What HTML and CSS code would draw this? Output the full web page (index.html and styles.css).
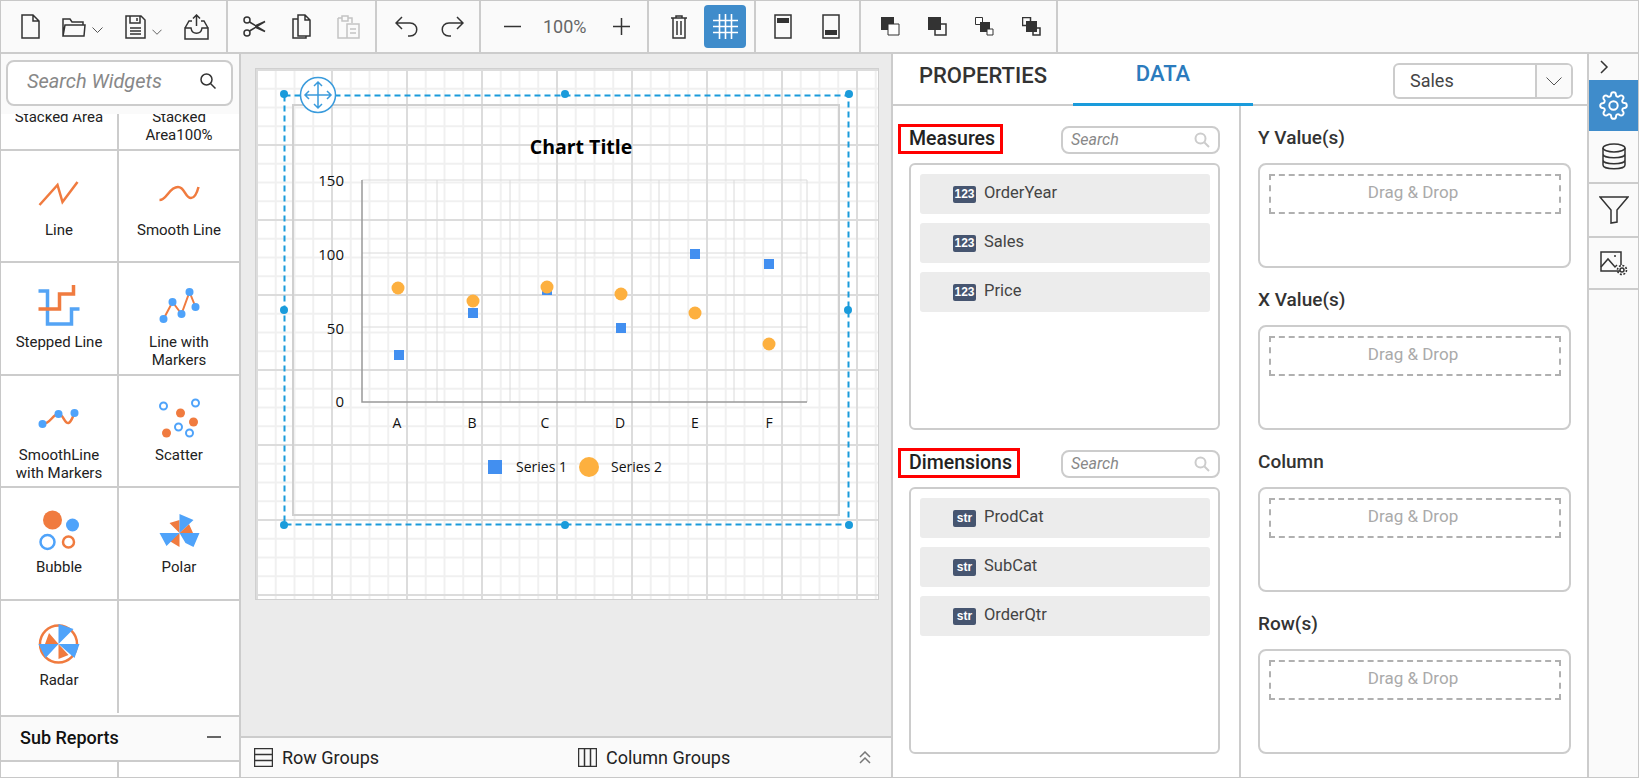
FILE: index.html
```html
<!DOCTYPE html>
<html lang="en">
<head>
    <meta charset="UTF-8">
    <title>Report Designer</title>
    <link rel="stylesheet" href="styles.css">
</head>
<body>
<div class="app">

    <div class="toolbar">
        <div class="tb-group tb-file">
            <svg class="ico" width="19" height="25" viewBox="0 0 19 25"><path d="M1 1h11l6 6v17H1zM12 1v6h6"/></svg>
            <span class="tb-drop">
                <svg class="ico" width="24" height="20" viewBox="0 0 24 20"><path d="M1 19V2h7l2 3h11v3M1 19h21l1-11H3L1 19z"/></svg>
                <svg class="chev" width="11" height="6" viewBox="0 0 11 6"><path d="M.5.5l5 5 5-5"/></svg>
            </span>
            <span class="tb-drop">
                <svg class="ico" width="21" height="24" viewBox="0 0 21 24"><path d="M1 1h15l4 4v18H1zM5 1v7h10V1M12 3v3M5 13h11M5 16h11M5 19h11"/></svg>
                <svg class="chev" width="10" height="6" viewBox="0 0 11 6"><path d="M.5.5l5 5 5-5"/></svg>
            </span>
            <svg class="ico" width="25" height="26" viewBox="0 0 25 26"><path d="M1 14l4-7h3M24 14l-4-7h-3M1 14v11h23V14h-6c-1 7-10 7-11 0H1zM12.500 12V1M9 4.500L12.500 1 16 4.500"/></svg>
        </div>
        <div class="tb-group tb-clip">
            <svg class="ico" width="23" height="21" viewBox="0 0 23 21"><circle cx="4" cy="4" r="3"/><circle cx="4" cy="17" r="3"/><path d="M6.500 6L22 15.500 12 11M6.500 15L22 5.500 12 10"/></svg>
            <svg class="ico" width="19" height="25" viewBox="0 0 19 25"><path d="M6 1h7l5 5v16H6zM6 5H1v19h13v-2M13 1v5h5"/></svg>
            <svg class="ico off" width="23" height="25" viewBox="0 0 23 25"><path d="M1 4h4V2h6v2h4v5M5 4v3h6V4M1 4v20h9M10 10h12v14H10zM13 15h6M13 19h6"/></svg>
        </div>
        <div class="tb-group tb-history">
            <svg class="ico" width="23" height="21" viewBox="0 0 23 21"><path d="M7 1L1 7l6 6M1 7h14c9 0 9 13 0 13h-2"/></svg>
            <svg class="ico" width="23" height="21" viewBox="0 0 23 21"><path d="M16 1l6 6-6 6M22 7H8c-9 0-9 13 0 13h2"/></svg>
        </div>
        <div class="tb-group tb-zoom">
            <svg class="ico" width="17" height="17" viewBox="0 0 17 17"><path d="M0 8.500h17"/></svg>
            <span class="zoom-value">100%</span>
            <svg class="ico" width="17" height="17" viewBox="0 0 17 17"><path d="M0 8.500h17M8.500 0v17"/></svg>
        </div>
        <div class="tb-group tb-edit">
            <svg class="ico" width="18" height="25" viewBox="0 0 18 25"><path d="M1 4h16M6 4V2h6v2M3 4v20h12V4M7 7v14M11 7v14"/></svg>
            <span class="grid-btn">
                <svg class="ico-white" width="25" height="25" viewBox="0 0 25 25"><path d="M0 6.500h25M0 12.500h25M0 18.500h25M6.500 0v25M12.500 0v25M18.500 0v25"/></svg>
            </span>
        </div>
        <div class="tb-group tb-band">
            <svg class="ico" width="18" height="25" viewBox="0 0 18 25"><path d="M1 1h16v23H1z"/><path class="solid" d="M3 4h12v5H3z"/></svg>
            <svg class="ico" width="18" height="25" viewBox="0 0 18 25"><path d="M1 1h16v23H1z"/><path class="solid" d="M3 16h12v5H3z"/></svg>
        </div>
        <div class="tb-group tb-order">
            <svg class="ico" width="19" height="19" viewBox="0 0 19 19"><path class="solid" d="M0 0h13v13H0z"/><path class="paper" d="M7 7h11v11H7z"/></svg>
            <svg class="ico" width="19" height="19" viewBox="0 0 19 19"><path d="M7 7h11v11H7z"/><path class="solid" d="M0 0h13v13H0z"/></svg>
            <svg class="ico" width="19" height="19" viewBox="0 0 19 19"><path class="paper" d="M.5.5h7v7h-7z"/><path class="solid" d="M5 5h10v10H5z"/><path class="paper" d="M12 12h6v6h-6z"/></svg>
            <svg class="ico" width="19" height="19" viewBox="0 0 19 19"><path d="M.5.500h8v8h-8zM11 11h7v7h-7z"/><path class="solid" d="M4 4h11v11H4z"/></svg>
        </div>
    </div>

    <div class="main">

        <div class="left-panel">
            <div class="widget-search-wrap">
                <div class="widget-search">
                    <span>Search Widgets</span>
                    <svg class="ico" width="16" height="16" viewBox="0 0 16 16"><circle cx="6.500" cy="6.500" r="5.500"/><path d="M10.500 10.500l5 5"/></svg>
                </div>
            </div>
            <div class="palette">
                <div class="palette-grid">
                    <div class="cell"><div class="cell-icon"></div><p>Stacked Area</p></div>
                    <div class="cell"><div class="cell-icon"></div><p>Stacked<br>Area100%</p></div>
                    <div class="cell">
                        <svg class="cell-icon" viewBox="0 0 48 48"><path class="or" d="M4.500 36L22.500 16l5 17 15-20"/></svg>
                        <p>Line</p>
                    </div>
                    <div class="cell">
                        <svg class="cell-icon" viewBox="0 0 48 48"><path class="or" d="M4.500 31C12 31 14 18 23 18c7 0 7 11 13 11 4 0 6-5 7.500-11"/></svg>
                        <p>Smooth Line</p>
                    </div>
                    <div class="cell">
                        <svg class="cell-icon" viewBox="0 0 48 48"><path class="bl-thick" d="M3.500 10h9v33h24V28h8"/><path class="or-thick" d="M3.500 28h21V13h14V4"/></svg>
                        <p>Stepped Line</p>
                    </div>
                    <div class="cell">
                        <svg class="cell-icon" viewBox="0 0 48 48"><path class="or-thin" d="M8.500 38l9-17 9 12 8-22 6 15"/><g class="bl-dots"><circle cx="8.500" cy="38" r="4"/><circle cx="17.500" cy="21" r="4"/><circle cx="26.500" cy="33" r="4"/><circle cx="34.500" cy="11" r="4"/><circle cx="40.500" cy="26" r="4"/></g></svg>
                        <p>Line with<br>Markers</p>
                    </div>
                    <div class="cell">
                        <svg class="cell-icon" viewBox="0 0 48 48"><path class="or" d="M7.500 30c8 0 10-10 16-10 5 0 6 10 10 9 3-1 4-6 6-10"/><g class="bl-dots"><circle cx="7.500" cy="30" r="4"/><circle cx="23.500" cy="20" r="4"/><circle cx="39.500" cy="19" r="4"/></g></svg>
                        <p>SmoothLine<br>with Markers</p>
                    </div>
                    <div class="cell">
                        <svg class="cell-icon" viewBox="0 0 48 48"><g class="bl-rings"><circle cx="8.500" cy="12" r="3.500"/><circle cx="40.500" cy="9" r="3.500"/><circle cx="23.500" cy="33" r="3.500"/><circle cx="34.500" cy="39" r="3.500"/></g><g class="or-dots"><circle cx="25.500" cy="19" r="4.500"/><circle cx="38.500" cy="28" r="4.500"/><circle cx="11.500" cy="39" r="4.500"/></g></svg>
                        <p>Scatter</p>
                    </div>
                    <div class="cell">
                        <svg class="cell-icon" viewBox="0 0 48 48"><g class="or-dots"><circle cx="17.500" cy="14" r="9.500"/></g><g class="bl-dots"><circle cx="37.500" cy="19" r="6.500"/></g><circle class="bl-ring-big" cx="12.500" cy="36" r="7"/><circle class="or-ring" cx="33.500" cy="36" r="5.500"/></svg>
                        <p>Bubble</p>
                    </div>
                    <div class="cell">
                        <svg class="cell-icon" viewBox="0 0 48 48"><g class="or-dots"><path d="M24.500 27L14.500 17l10-3zM24.500 27L34 18l4 9zM24.500 27v14l-10-6z"/></g><g class="bl-dots"><path d="M24.500 27V8l14 6zM24.500 27H4.500l7 13zM24.500 27h20l-6 14-8-4z"/></g></svg>
                        <p>Polar</p>
                    </div>
                    <div class="cell">
                        <svg class="cell-icon" viewBox="0 0 48 48"><circle class="or-ring-wide" cx="23.500" cy="25" r="18.500"/><g class="or-dots"><path d="M23.500 25L10 25l4-11zM23.500 25v15l10-4z"/></g><g class="bl-dots"><path d="M23.500 25V5l15 5zM23.500 25h-20l7 14zM23.500 25h21l-5 14z"/></g></svg>
                        <p>Radar</p>
                    </div>
                    <div class="cell"></div>
                </div>
            </div>
            <div class="sub-head">
                <span>Sub Reports</span>
                <svg class="ico" width="14" height="2" viewBox="0 0 14 2"><path d="M0 1h14"/></svg>
            </div>
            <div class="sub-stub"><div></div><div></div></div>
        </div>

        <div class="center">
            <div class="canvas">
                <div class="paper">
                    <svg class="chart" width="622" height="530" viewBox="256 69 622 530">
                        <rect class="frame" x="293" y="105" width="546" height="410"/>

                        <g class="plot-grid">
                            <path d="M362 180H807M362 253H807M362 327H807M437 180V402M510 180V402M585 180V402M659 180V402M734 180V402M807 180V402"/>
                        </g>
                        <path class="axis" d="M362 180V402H807"/>

                        <text class="chart-title" x="581" y="154" text-anchor="middle">Chart Title</text>
                        <text class="chart-num" x="344" y="186" text-anchor="end">150</text>
                        <text class="chart-num" x="344" y="260" text-anchor="end">100</text>
                        <text class="chart-num" x="344" y="334" text-anchor="end">50</text>
                        <text class="chart-num" x="344" y="407" text-anchor="end">0</text>
                        <text class="chart-label" x="397" y="428" text-anchor="middle">A</text>
                        <text class="chart-label" x="472" y="428" text-anchor="middle">B</text>
                        <text class="chart-label" x="545" y="428" text-anchor="middle">C</text>
                        <text class="chart-label" x="620" y="428" text-anchor="middle">D</text>
                        <text class="chart-label" x="695" y="428" text-anchor="middle">E</text>
                        <text class="chart-label" x="769" y="428" text-anchor="middle">F</text>

                        <g class="series-1">
                            <rect x="394" y="350" width="10" height="10"/>
                            <rect x="468" y="308" width="10" height="10"/>
                            <rect x="542" y="285" width="10" height="10"/>
                            <rect x="616" y="323" width="10" height="10"/>
                            <rect x="690" y="249" width="10" height="10"/>
                            <rect x="764" y="259" width="10" height="10"/>
                        </g>
                        <g class="series-2">
                            <circle cx="398" cy="288" r="6.500"/>
                            <circle cx="473" cy="301" r="6.500"/>
                            <circle cx="547" cy="287" r="6.500"/>
                            <circle cx="621" cy="294" r="6.500"/>
                            <circle cx="695" cy="313" r="6.500"/>
                            <circle cx="769" cy="344" r="6.500"/>
                        </g>

                        <rect class="legend-1" x="488" y="460" width="14" height="14"/>
                        <text class="chart-label" x="516" y="472">Series 1</text>
                        <circle class="legend-2" cx="589" cy="467" r="10"/>
                        <text class="chart-label" x="611" y="472">Series 2</text>

                        <rect class="select-line" x="284.500" y="95.500" width="564" height="429"/>
                        <g class="select-dots">
                            <circle cx="284" cy="94" r="4"/><circle cx="565" cy="94" r="4"/><circle cx="849" cy="94" r="4"/>
                            <circle cx="284" cy="310" r="4"/><circle cx="848" cy="310" r="4"/>
                            <circle cx="284" cy="525" r="4"/><circle cx="565" cy="525" r="4"/><circle cx="849" cy="525" r="4"/>
                        </g>
                        <circle class="move-ring" cx="318" cy="95" r="17.500"/>
                        <path class="move-arrows" d="M318 82V108M305 95H331M314 86l4-4 4 4M314 104l4 4 4-4M309 91l-4 4 4 4M327 91l4 4-4 4"/>
                    </svg>
                </div>
            </div>
            <div class="group-bar">
                <div class="group-item group-item-row">
                    <svg class="ico" width="19" height="19" viewBox="0 0 19 19"><path d="M.5.500h18v18H.5zM.5 6.500h18M.5 12.500h18"/></svg>
                    <span>Row Groups</span>
                </div>
                <div class="group-item">
                    <svg class="ico" width="19" height="19" viewBox="0 0 19 19"><path d="M.5.500h18v18H.5zM6.500.500v18M12.500.500v18"/></svg>
                    <span>Column Groups</span>
                </div>
                <svg class="collapse" width="12" height="13" viewBox="0 0 12 13"><path d="M1 6l5-5 5 5M1 12l5-5 5 5"/></svg>
            </div>
        </div>

        <div class="right-panel">
            <div class="tabs">
                <div class="tab-link">PROPERTIES</div>
                <div class="tab-link active">DATA</div>
                <div class="dataset-select">
                    <span class="dataset-name">Sales</span>
                    <span class="dataset-arrow"><svg class="chev" width="16" height="9" viewBox="0 0 16 9"><path d="M.5.500l7.500 7.500L15.500.5"/></svg></span>
                </div>
            </div>
            <div class="data-body">
                <div class="field-col">
                    <div class="field-head">
                        <span class="field-title marked">Measures</span>
                        <div class="mini-search">
                            <span>Search</span>
                            <svg width="16" height="16" viewBox="0 0 16 16"><circle cx="6.500" cy="6.500" r="5"/><path d="M10.500 10.500l4.500 4.500"/></svg>
                        </div>
                    </div>
                    <div class="field-list">
                        <div class="field-item"><span class="type-badge">123</span>OrderYear</div>
                        <div class="field-item"><span class="type-badge">123</span>Sales</div>
                        <div class="field-item"><span class="type-badge">123</span>Price</div>
                    </div>
                    <div class="field-head">
                        <span class="field-title marked">Dimensions</span>
                        <div class="mini-search">
                            <span>Search</span>
                            <svg width="16" height="16" viewBox="0 0 16 16"><circle cx="6.500" cy="6.500" r="5"/><path d="M10.500 10.500l4.500 4.500"/></svg>
                        </div>
                    </div>
                    <div class="field-list">
                        <div class="field-item"><span class="type-badge">str</span>ProdCat</div>
                        <div class="field-item"><span class="type-badge">str</span>SubCat</div>
                        <div class="field-item"><span class="type-badge">str</span>OrderQtr</div>
                    </div>
                </div>
                <div class="drop-col">
                    <div class="drop-title">Y Value(s)</div>
                    <div class="drop-box"><div class="drop-zone">Drag &amp; Drop</div></div>
                    <div class="drop-title">X Value(s)</div>
                    <div class="drop-box"><div class="drop-zone">Drag &amp; Drop</div></div>
                    <div class="drop-title">Column</div>
                    <div class="drop-box"><div class="drop-zone">Drag &amp; Drop</div></div>
                    <div class="drop-title">Row(s)</div>
                    <div class="drop-box"><div class="drop-zone">Drag &amp; Drop</div></div>
                </div>
            </div>
        </div>

        <div class="rail">
            <div class="rail-item rail-toggle">
                <svg class="ico" width="9" height="14" viewBox="0 0 9 14"><path d="M1 1l6 6-6 6"/></svg>
            </div>
            <div class="rail-item rail-active">
                <svg class="ico-white" width="29" height="29" viewBox="0 0 24 24"><circle cx="12" cy="12" r="3.500"/><path d="M19.400 15a1.650 1.650 0 0 0 .33 1.820l.06.06a2 2 0 0 1 0 2.830 2 2 0 0 1-2.830 0l-.06-.06a1.650 1.650 0 0 0-1.820-.33 1.650 1.650 0 0 0-1 1.510V21a2 2 0 0 1-2 2 2 2 0 0 1-2-2v-.09A1.650 1.650 0 0 0 9 19.400a1.650 1.650 0 0 0-1.820.33l-.06.06a2 2 0 0 1-2.830 0 2 2 0 0 1 0-2.830l.06-.06a1.650 1.650 0 0 0 .33-1.820 1.650 1.650 0 0 0-1.510-1H3a2 2 0 0 1-2-2 2 2 0 0 1 2-2h.09A1.650 1.650 0 0 0 4.600 9a1.650 1.650 0 0 0-.33-1.820l-.06-.06a2 2 0 0 1 0-2.830 2 2 0 0 1 2.830 0l.06.06a1.650 1.650 0 0 0 1.820.33H9a1.650 1.650 0 0 0 1-1.510V3a2 2 0 0 1 2-2 2 2 0 0 1 2 2v.09a1.650 1.650 0 0 0 1 1.510 1.650 1.650 0 0 0 1.820-.33l.06-.06a2 2 0 0 1 2.830 0 2 2 0 0 1 0 2.830l-.06.06a1.650 1.650 0 0 0-.33 1.820V9a1.650 1.650 0 0 0 1.510 1H21a2 2 0 0 1 2 2 2 2 0 0 1-2 2h-.09a1.650 1.650 0 0 0-1.510 1z"/></svg>
            </div>
            <div class="rail-item rail-db">
                <svg class="ico" width="24" height="27" viewBox="0 0 24 27"><ellipse cx="12" cy="5" rx="11" ry="4"/><path d="M1 5v17c0 5 22 5 22 0V5M1 11c0 5 22 5 22 0M1 17c0 5 22 5 22 0"/></svg>
            </div>
            <div class="rail-item rail-filter">
                <svg class="ico" width="30" height="28" viewBox="0 0 30 28"><path d="M1 1h28L18 14v12l-6 1V14z"/></svg>
            </div>
            <div class="rail-item">
                <svg class="ico" width="28" height="25" viewBox="0 0 28 25"><path d="M20 20H1V1h20v13"/><path d="M1 16l7-8 7 8 2-2"/><circle class="solid" cx="15" cy="5" r="1"/><circle cx="22" cy="19" r="2"/><circle class="dashed" cx="22" cy="19" r="4.500"/></svg>
            </div>
        </div>

    </div>
</div>
</body>
</html>
```

FILE: styles.css
```css
* { box-sizing: border-box; }
html, body { margin: 0; padding: 0; }
body { font-family: Roboto, "Liberation Sans", sans-serif; color: #222; background: #fff; }
svg { display: block; }
p { margin: 0; }

.app { width: 1639px; height: 778px; border: 1px solid #c8c8c8; display: flex; flex-direction: column; overflow: hidden; }

/* shared icon strokes */
.ico { fill: none; stroke: #333; stroke-width: 1.5; flex: none; }
.ico-white { fill: none; stroke: #fff; stroke-width: 1.6; flex: none; }
.chev { fill: none; stroke: #555; stroke-width: 1; }
.ico .solid { fill: #333; stroke: none; }
.ico .paper { fill: #fff; stroke: #333; stroke-width: 1; }
.ico .dashed { stroke-width: 1.6; stroke-dasharray: 2 1.500; }
.ico.off { stroke: #c4c4c4; }

/* toolbar */
.toolbar { height: 53px; flex: none; display: flex; background: #fafafa; border-bottom: 2px solid #ccc; }
.tb-group { display: flex; align-items: center; border-right: 2px solid #ccc; height: 51px; }
.tb-drop { display: flex; align-items: flex-end; gap: 6px; }
.tb-drop .chev { margin-bottom: 4px; }
.tb-file { padding: 0 17px 0 20px; gap: 22px; }
.tb-clip { padding: 0 15px 0 15px; gap: 26px; }
.tb-history { padding: 0 15px 0 18px; gap: 23px; }
.tb-zoom { padding: 0 17px 0 23px; gap: 22px; }
.tb-edit { padding: 0 8px 0 21px; gap: 16px; }
.tb-band { padding: 0 19px 0 18px; gap: 30px; }
.tb-order { padding: 0 15px 0 20px; gap: 28px; }
.zoom-value { font-size: 18px; color: #666; width: 44px; margin-right: 4px; white-space: nowrap; }
.grid-btn { width: 42px; height: 43px; background: #3f8ccb; border-radius: 4px; display: flex; align-items: center; justify-content: center; }

.main { flex: 1; display: flex; min-height: 0; }

/* widget palette */
.left-panel { width: 240px; flex: none; display: flex; flex-direction: column; border-right: 2px solid #ccc; }
.widget-search-wrap { height: 60px; flex: none; padding: 6px 6px 0 5px; background: #fafafa; }
.widget-search { height: 46px; display: flex; align-items: center; justify-content: space-between; padding: 0 15px 4px 19px; background: #fff; border: 2px solid #ccc; border-radius: 8px; }
.widget-search span { font-style: italic; font-size: 20px; color: #888; }
.palette { flex: 1; overflow: hidden; min-height: 0; }
.palette-grid { margin-top: -76px; display: grid; grid-template-columns: 118px 120px; grid-auto-rows: 112.500px; }
.cell { padding-top: 18px; text-align: center; font-size: 15px; line-height: 18px; color: #222; border-bottom: 2px solid #ccc; }
.cell:nth-child(odd) { border-right: 2px solid #ccc; }
.cell:nth-last-child(-n+2) { border-bottom: none; }
.cell-icon { width: 48px; height: 48px; margin: 0 auto 4px; }
.cell-icon path, .cell-icon circle { fill: none; }
.cell-icon .or { stroke: #f07b3f; stroke-width: 2.500; }
.cell-icon .or-thin { stroke: #f07b3f; stroke-width: 2; }
.cell-icon .or-thick { stroke: #f07b3f; stroke-width: 3.500; }
.cell-icon .bl-thick { stroke: #54a4f5; stroke-width: 3.500; }
.bl-dots circle, .cell-icon .bl-dots path { fill: #4fa3fa; }
.or-dots circle, .cell-icon .or-dots path { fill: #f07b3f; }
.bl-rings circle { stroke: #4fa3fa; stroke-width: 2; }
.cell-icon .bl-ring-big { stroke: #4fa3fa; stroke-width: 2.500; }
.cell-icon .or-ring { stroke: #f07b3f; stroke-width: 2.500; }
.cell-icon .or-ring-wide { stroke: #f07b3f; stroke-width: 2.500; }

.sub-head { height: 47px; flex: none; display: flex; align-items: center; justify-content: space-between; padding: 0 18px 3px 19px; background: #fafafa; border-top: 2px solid #ccc; border-bottom: 2px solid #ccc; font-size: 18px; font-weight: 500; color: #111; }
.sub-stub { flex: none; height: 15px; display: grid; grid-template-columns: 118px 120px; }
.sub-stub div:first-child { border-right: 2px solid #ccc; }

/* design canvas */
.center { width: 650px; flex: none; display: flex; flex-direction: column; }
.canvas { flex: 1; min-height: 0; background: #ebebeb; padding: 14px 0 0 14px; }
.paper {
    width: 624px;
    height: 532px;
    border: 1px solid #d0d0d0;
    background-color: #fff;
    background-image:
        linear-gradient(to right, #dcdcdc 2px, transparent 2px),
        linear-gradient(to bottom, #dcdcdc 2px, transparent 2px),
        linear-gradient(to right, #f0f0f0 2px, transparent 2px),
        linear-gradient(to bottom, #f0f0f0 2px, transparent 2px);
    background-size: 75px 75px, 75px 75px, 18.750px 18.750px, 18.750px 18.750px;
}
.chart .frame { fill: none; stroke: #d0d0d0; stroke-width: 2; }
.plot-grid path { fill: none; stroke: #dadada; stroke-width: 1; }
.chart .axis { fill: none; stroke: #999; stroke-width: 1.500; }
.chart-title { font-family: "Open Sans", sans-serif; font-weight: 700; font-size: 19.500px; fill: #000; }
.chart-label { font-family: "Open Sans", sans-serif; font-size: 14px; fill: #111; }
.chart-num { font-family: "Open Sans", sans-serif; font-size: 15px; fill: #111; }
.series-1 rect, .legend-1 { fill: #428ff0; }
.series-2 circle, .legend-2 { fill: #fdb03f; }
.select-line { fill: none; stroke: #1a9bdb; stroke-width: 2; stroke-dasharray: 6 4; }
.select-dots circle { fill: #1a9bdb; }
.move-ring { fill: #fff; stroke: #3a9bdc; stroke-width: 1.500; }
.move-arrows { fill: none; stroke: #3a9bdc; stroke-width: 1.500; }

.group-bar { height: 41px; flex: none; display: flex; align-items: center; padding: 0 20px 0 13px; background: #fafafa; border-top: 2px solid #ccc; font-size: 18px; color: #222; }
.group-item { display: flex; align-items: center; gap: 9px; }
.group-item-row { width: 324px; }
.collapse { margin-left: auto; fill: none; stroke: #777; stroke-width: 1.500; }

/* properties panel */
.right-panel { width: 696px; flex: none; display: flex; flex-direction: column; border-left: 2px solid #ccc; }
.tabs { height: 52px; flex: none; display: flex; border-bottom: 2px solid #ccc; position: relative; }
.tab-link { width: 180px; height: 52px; display: flex; align-items: center; justify-content: center; padding-bottom: 10px; font-size: 22px; font-weight: 500; color: #333; }
.tab-link.active { color: #2b7bbd; border-bottom: 3px solid #1a9bdb; }
.dataset-select { margin: 9px 14px 0 auto; width: 180px; height: 36px; display: flex; border: 2px solid #ccc; border-radius: 6px; font-size: 18px; color: #444; }
.dataset-name { flex: 1; padding-left: 15px; line-height: 32px; }
.dataset-arrow { width: 36px; background: #fafafa; border-left: 2px solid #ccc; border-radius: 0 4px 4px 0; display: flex; align-items: center; justify-content: center; }

.data-body { flex: 1; display: flex; min-height: 0; }
.field-col { width: 348px; flex: none; padding: 18px 19px 0 5px; border-right: 2px solid #ccc; }
.field-head { height: 30px; display: flex; align-items: center; justify-content: space-between; margin-bottom: 9px; }
.field-title { font-size: 19.500px; font-weight: 500; color: #222; }
.field-title.marked { height: 30px; line-height: 24px; padding: 0 5px 0 8px; border: 3px solid #f00; }
.mini-search { width: 159px; height: 28px; margin-top: 2px; display: flex; align-items: center; justify-content: space-between; padding: 0 8px 1px 8px; border: 2px solid #ccc; border-radius: 8px; }
.mini-search span { font-style: italic; font-size: 16px; color: #888; }
.mini-search svg { fill: none; stroke: #ccc; stroke-width: 2; }
.field-list { height: 267px; margin: 0 0 18px 11px; padding: 9px 8px 0 9px; display: flex; flex-direction: column; gap: 9px; border: 2px solid #ccc; border-radius: 6px; }
.field-item { height: 40px; display: flex; align-items: center; padding: 0 0 4px 33px; background: #ececec; border-radius: 3px; font-size: 16.500px; color: #444; }
.type-badge { width: 23px; height: 17px; margin: 4px 8px 0 0; background: #465570; border-radius: 2px; color: #fff; font-family: "Liberation Sans", sans-serif; font-size: 12px; font-weight: 700; line-height: 17px; text-align: center; }

.drop-col { flex: 1; padding: 18px 16px 0 17px; }
.drop-title { height: 28px; margin-bottom: 11px; font-size: 19px; font-weight: 500; line-height: 28px; color: #333; }
.drop-box { height: 105px; margin-bottom: 18px; padding: 9px 8px 0 9px; border: 2px solid #ccc; border-radius: 8px; }
.drop-zone { height: 40px; padding-right: 4px; border: 2px dashed #b0b0b0; text-align: center; font-size: 17px; line-height: 33px; color: #aaa; }

/* side rail */
.rail { flex: 1; background: #fafafa; border-left: 2px solid #ccc; display: flex; flex-direction: column; }
.rail-item { height: 52px; display: flex; align-items: center; justify-content: center; border-bottom: 2px solid #ccc; }
.rail-toggle { height: 26px; justify-content: flex-start; padding-left: 11px; border-bottom: none; }
.rail-active { height: 51px; background: #3f8ccb; border-bottom: none; }
.rail-db { height: 53px; }
.rail-filter { height: 54px; }
```
